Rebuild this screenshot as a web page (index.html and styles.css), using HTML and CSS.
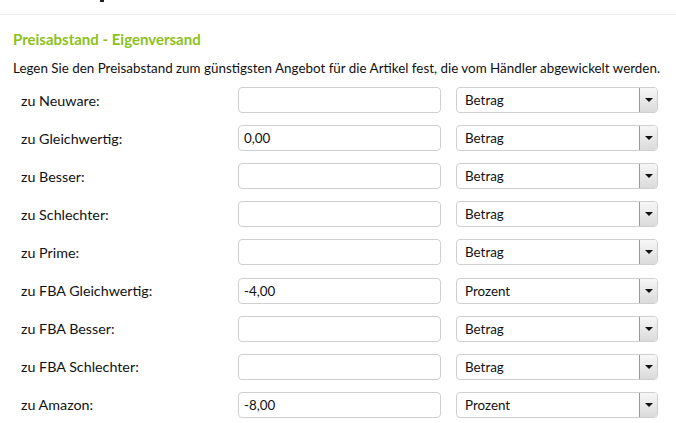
FILE: index.html
```html
<!DOCTYPE html>
<html lang="de">
<head>
  <meta charset="UTF-8" />
  <title>Preisabstand - Eigenversand</title>
  <link rel="stylesheet" href="styles.css">
</head>
<body>

  <div class="topbar"><span class="tab-mark"></span></div>

  <section class="panel">
    <h2>Preisabstand - Eigenversand</h2>
    <p class="hint">Legen Sie den Preisabstand zum günstigsten Angebot für die Artikel fest, die vom Händler abgewickelt werden.</p>

    <div class="rows">
      <div class="row">
        <label>zu Neuware:</label>
        <input type="text" value="">
        <div class="select"><span>Betrag</span><i class="arrow"></i></div>
      </div>
      <div class="row">
        <label>zu Gleichwertig:</label>
        <input type="text" value="0,00">
        <div class="select"><span>Betrag</span><i class="arrow"></i></div>
      </div>
      <div class="row">
        <label>zu Besser:</label>
        <input type="text" value="">
        <div class="select"><span>Betrag</span><i class="arrow"></i></div>
      </div>
      <div class="row">
        <label>zu Schlechter:</label>
        <input type="text" value="">
        <div class="select"><span>Betrag</span><i class="arrow"></i></div>
      </div>
      <div class="row">
        <label>zu Prime:</label>
        <input type="text" value="">
        <div class="select"><span>Betrag</span><i class="arrow"></i></div>
      </div>
      <div class="row">
        <label>zu FBA Gleichwertig:</label>
        <input type="text" value="-4,00">
        <div class="select"><span>Prozent</span><i class="arrow"></i></div>
      </div>
      <div class="row">
        <label>zu FBA Besser:</label>
        <input type="text" value="">
        <div class="select"><span>Betrag</span><i class="arrow"></i></div>
      </div>
      <div class="row">
        <label>zu FBA Schlechter:</label>
        <input type="text" value="">
        <div class="select"><span>Betrag</span><i class="arrow"></i></div>
      </div>
      <div class="row">
        <label>zu Amazon:</label>
        <input type="text" value="-8,00">
        <div class="select"><span>Prozent</span><i class="arrow"></i></div>
      </div>
    </div>
  </section>

</body>
</html>
```

FILE: styles.css
```css
* {
  margin: 0;
  padding: 0;
  box-sizing: border-box;
}

body {
  background-color: #ffffff;
  font-family: "Lato", "Open Sans", sans-serif;
  font-size: 13px;
  color: #111;
}

.topbar {
  height: 15px;
  border-bottom: 1px solid #ebebeb;
  position: relative;
}

.tab-mark {
  position: absolute;
  left: 100px;
  top: 0;
  width: 4px;
  height: 2px;
  background-color: #222;
}

.panel {
  padding: 15px 13px 0;
}

.panel h2 {
  font-size: 15px;
  font-weight: 700;
  color: #8cc11c;
  line-height: 18px;
}

.hint {
  margin-top: 12px;
  font-size: 13.4px;
  line-height: 16px;
}

.rows {
  margin-top: 5px;
  padding-left: 8px;
}

.row {
  display: flex;
  align-items: center;
  height: 38.1px;
}

.row label {
  width: 217px;
  font-size: 14.3px;
}

.row input {
  width: 203px;
  height: 26px;
  border: 1px solid #cfcfcf;
  border-radius: 4px;
  padding: 0 5px;
  font-family: inherit;
  font-size: 13.4px;
  color: #111;
  outline: none;
}

.select {
  margin-left: 15px;
  width: 202px;
  height: 26px;
  border: 1px solid #cfcfcf;
  border-radius: 4px;
  display: flex;
  align-items: center;
  justify-content: space-between;
  padding-left: 8px;
  font-size: 13.4px;
}

.select .arrow {
  width: 18px;
  height: 24px;
  border-left: 1px solid #9a9a9a;
  background: linear-gradient(#f7f7f7, #dadada);
  border-radius: 0 3px 3px 0;
  position: relative;
}

.select .arrow::after {
  content: "";
  position: absolute;
  left: 5px;
  top: 10px;
  border-left: 4px solid transparent;
  border-right: 4px solid transparent;
  border-top: 4px solid #111;
}
```
